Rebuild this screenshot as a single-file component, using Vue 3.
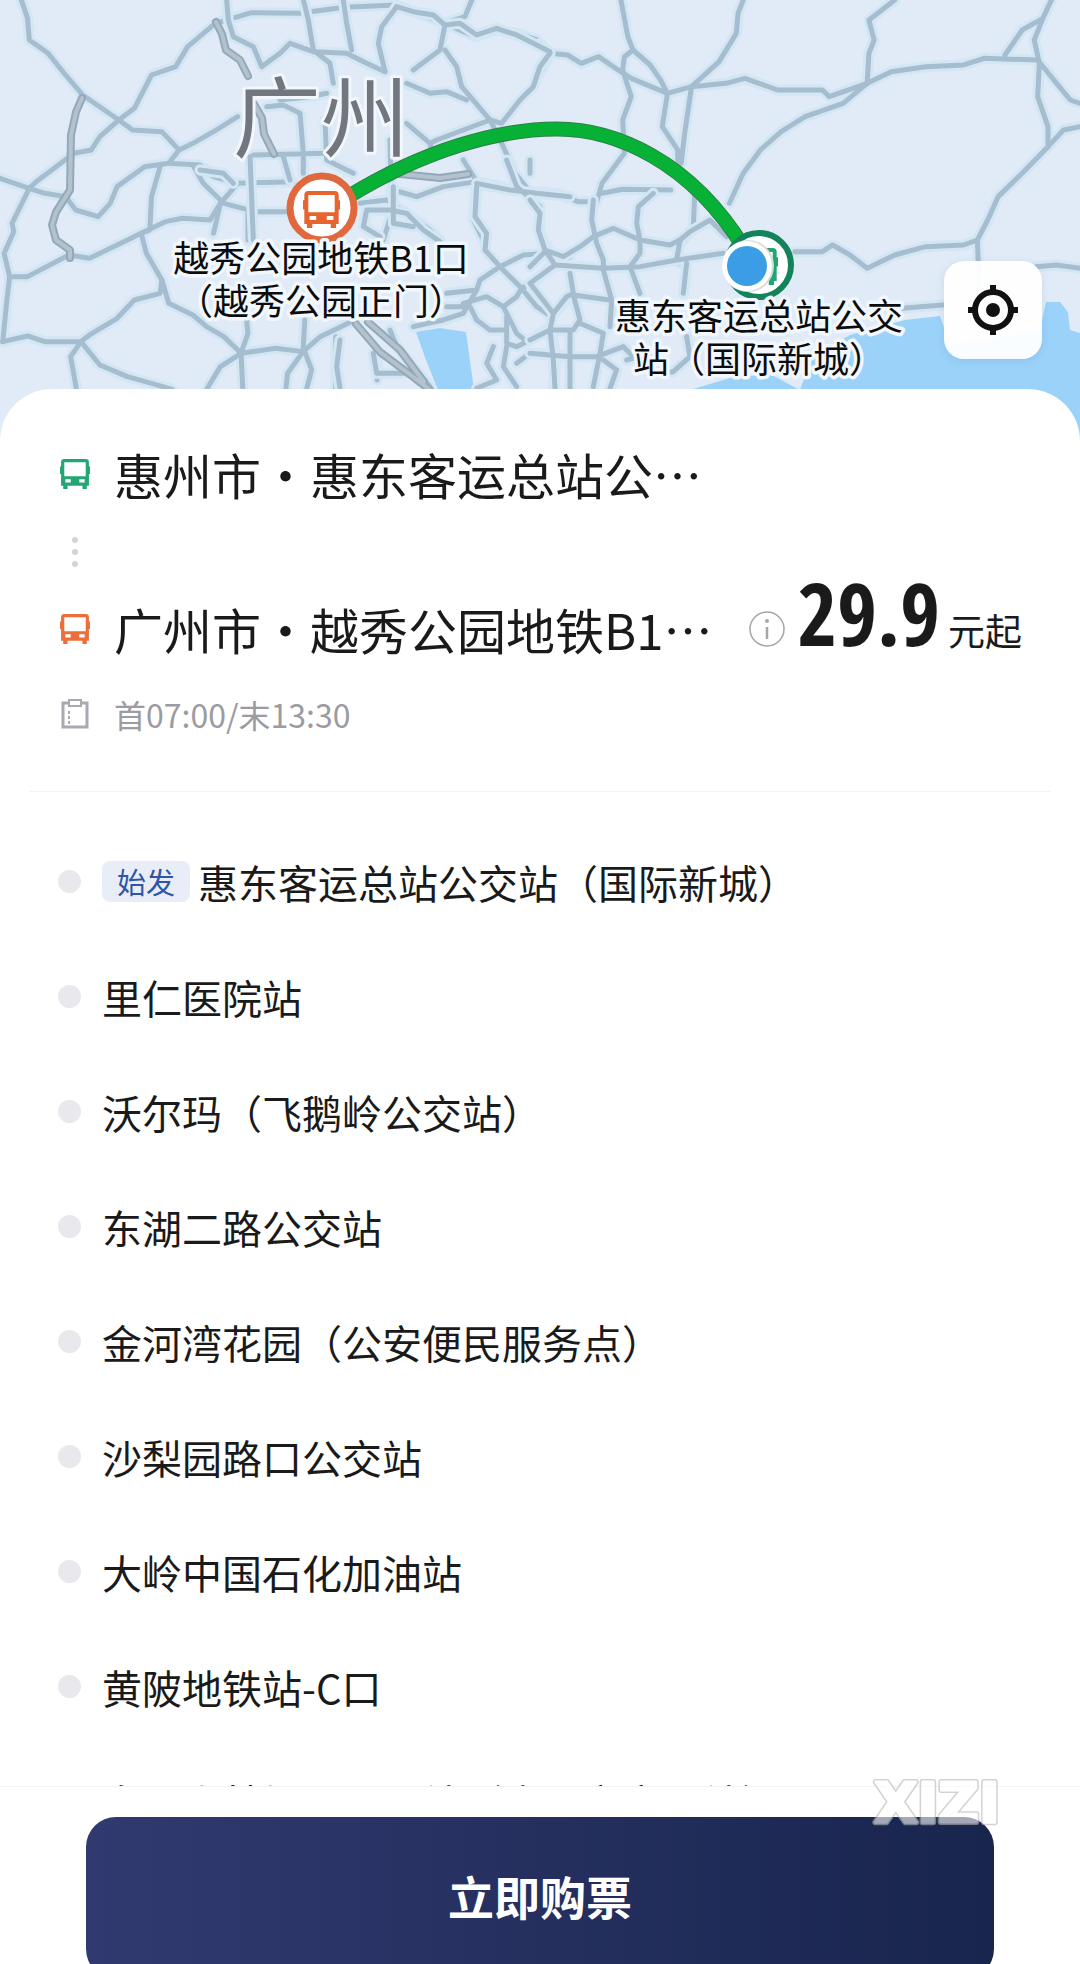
<script setup>
const roadTiles = [
  {
    transform: 'scale(.3444 .3333)',
    roads: [
      'M62 0L80 55 85 120 140 160 190 225 240 285 345 360 390 325 440 225 510 200 545 140 625 70 730 38 870 40 1000 22 1150 15 1290 70',
      'M345 360L385 390 470 395 520 450 560 430 620 395 690 350',
      'M345 360L290 410 265 450 215 460 105 545 85 565 0 535',
      'M85 565L35 670 40 695 12 760 28 830 80 830 200 765 260 775 340 735 410 700 480 665 530 655 610 660 640 610 690 550 850 545',
      'M28 830L20 900 8 1025',
      'M85 565L130 580 190 590 220 630 285 650 320 610 340 560 420 500 490 490 520 450',
      'M490 490L580 495 620 530 690 550',
      'M465 500L440 590 435 690 410 700 425 760 470 840 490 910 560 945 600 980 650 1010 700 1060',
      'M560 495L590 550 650 610 740 635 830 635',
      'M470 840L465 880 390 900 340 955 260 1005 235 1025 130 1025 80 1008 8 1025',
      'M235 1025L205 1070 222 1168',
      'M235 1025L290 1095 370 1130 440 1150 500 1168',
      'M720 640L720 720M640 610L620 700',
      'M700 1060L720 1000 715 950M700 1060L640 1100 600 1168M700 1060L800 1045 880 1055 930 1010 1030 960',
      'M700 1060L705 1168M880 1055L885 960M880 1055L835 1120 830 1168M885 1055L905 1110 890 1168M975 1010L975 1168M1095 1070L1095 1140',
      'M1560 120L1500 100 1440 90 1380 110 1290 70M1290 70L1350 50 1370 0',
    ],
  },
  {
    transform: 'translate(540 0) scale(.3444 .3333)',
    roads: [
      'M235 0L255 110 270 150 245 170 240 210 265 290 240 360 245 460 180 550 165 605 110 605 50 580 0 580',
      'M0 130L30 160 80 165 120 190 170 170 220 205 265 235 370 280 440 260 520 185 570 100 575 40 590 0',
      'M30 160L0 220M270 150L320 195 350 240 370 280 355 380 400 450 400 490M440 260L420 400 410 490',
      'M440 260L540 250 595 235 690 270 820 270 840 290 950 250 1020 215 1120 200 1230 195 1290 175 1445 180',
      'M950 250L955 160 970 120 955 60 1030 0M1350 165L1400 90 1460 55 1485 0M1460 55L1435 120 1450 190 1445 290 1475 380 1475 440 1400 520 1330 590 1300 660 1270 720 1275 860',
      'M1445 180L1500 250 1540 300 1568 310M1475 440L1520 390 1568 380',
      'M950 250L880 310 770 350 700 395 640 450 590 520 550 610',
      'M740 755L820 755 850 735 900 765 950 805 1030 765 1120 740 1230 735 1270 720M1440 800L1500 795 1568 805',
      'M1050 925L1170 915M180 580L240 568 380 570M450 560L445 690M450 680L400 740 405 790',
    ],
  },
  {
    transform: 'translate(200 0) scale(.3333)',
    roads: [
      'M80 0L85 60 100 110 160 140 185 200 240 160 270 130 340 155 440 160 500 190 555 215',
      'M310 0L325 60 340 150 390 190 400 250M430 0L440 70 455 150M590 20L545 80 535 130 555 215',
      'M590 20L640 35 700 45 735 75 720 150 640 210M735 75L780 70 830 105 890 85 950 105 1000 130 1050 155',
      'M735 150L770 200 785 260 870 360 905 370 960 300 1000 260 1020 200 1050 160',
      'M620 250L690 280 740 275 800 300M870 360L790 390 710 420 690 430 620 370M690 430L700 470',
      'M870 360L910 440 945 520 990 575 1050 578M790 480L830 545 930 565 1000 575M830 545L820 660 850 720',
      'M0 510L70 520 100 550M150 470L160 720M300 340L310 460 310 520M200 320L250 315 300 340M160 465L370 460M250 470L270 540M375 360L380 480 460 520',
      'M240 300L330 290 380 280M570 420L575 640 550 720M480 610L560 600 620 640 690 690 720 720M580 570L650 590 730 560 830 545',
    ],
  },
  {
    transform: 'translate(330 160) scale(.3333)',
    roads: [
      'M110 150L180 150 230 160 280 210 330 245M190 80L190 190 250 200M110 150L100 200 150 230',
      'M440 80L435 170 470 220 465 270 510 320 450 360 440 390 350 400',
      'M510 320L580 285 650 280 700 300 720 290M510 320L575 385 620 360 670 310M575 385L560 410 520 440 470 410 400 430',
      'M575 385L620 440 665 470 660 500 600 540 560 560 530 550 530 470M665 470L720 410M520 440L560 520 590 545',
      'M440 70L540 90 620 100 720 110M530 0L560 80 630 140 630 220 660 280M350 440L420 440 440 480 480 510 530 510',
      'M660 510L720 515M660 510L680 590 670 680M600 580L720 585M560 610L600 580M530 560L520 620 560 680M490 560L470 610 500 660 440 685',
      'M440 390L400 460 340 480 250 500M180 510L200 560 250 620 300 680M30 540L20 620 30 685M130 580L140 640 220 640',
    ],
  },
  {
    transform: 'translate(530 160) scale(.3333)',
    roads: [
      'M0 120L30 160 25 210 45 270 100 290 150 260 190 230M190 120L185 180 200 250 220 300 220 330',
      'M190 230L250 205 330 240M370 100L325 140 320 190 330 240 420 255 450 240M330 240L330 280 300 320 330 400',
      'M45 270L75 315 220 325 330 320 440 300 580 280M450 240L440 300M470 310L460 400M75 315L0 370 70 460 110 410 130 400 120 340',
      'M0 320L45 275M130 405L240 420M70 460L60 510 0 540M60 510L130 510 150 480 130 405M150 490L220 520 210 580 190 680M220 330L245 420 240 500M60 510L70 600 75 685',
      'M450 240L480 215 540 180 590 230M0 580L120 590 200 590 280 560 310 590M120 520L120 685M0 40L0 0M220 600L260 630 240 685M290 600L360 580',
      'M470 530L480 590 430 635 380 640',
    ],
  },
]

const expressways = [
  'M82 98L76 112 71 135 70 190 56 212 52 225 56 240 70 250 70 258',
  'M216 22L222 34 226 50 240 60 248 76',
  'M254 104L262 118 264 134 274 154',
  'M400 174L440 178 468 174',
  'M356 324L380 352 412 376 430 390M368 322L400 350 424 382',
]

const stations = [
  { name: '惠东客运总站公交站（国际新城）', tag: '始发' },
  { name: '里仁医院站' },
  { name: '沃尔玛（飞鹅岭公交站）' },
  { name: '东湖二路公交站' },
  { name: '金河湾花园（公安便民服务点）' },
  { name: '沙梨园路口公交站' },
  { name: '大岭中国石化加油站' },
  { name: '黄陂地铁站-C口' },
  { name: '白马山林场三元里站（广州市客运站）' },
]
</script>

<template>
  <main class="page">
    <section class="map">
      <svg class="map-canvas" viewBox="0 0 1080 440" preserveAspectRatio="xMidYMin slice">
        <defs>
          <symbol id="bus" viewBox="0 0 28 28">
            <path
              fill="currentColor"
              fill-rule="evenodd"
              d="M4 0H24Q27 0 27 3V7H28V14H27V25H25V28H21V25H7V28H3V25H1V14H0V7H1V3Q1 0 4 0ZM4 3V16H24V3ZM5 19V22H10V19ZM18 19V22H23V19Z"
            />
          </symbol>
        </defs>
        <rect width="1080" height="440" fill="#e0ebf7" />
        <path
          class="sea"
          d="M690 390L730 378 770 374 800 390 812 356 850 335 905 320 940 316 950 345 1040 330 1046 302 1060 302 1068 312 1070 330 1080 333V440H690Z"
        />
        <path class="sea" d="M416 332L440 328 466 332 474 390 438 390 426 360Z" />
        <g v-for="tile in roadTiles" :key="tile.transform" :transform="tile.transform">
          <path v-for="road in tile.roads" :key="road" class="road-halo" :d="road" />
          <path v-for="road in tile.roads" :key="road + 'r'" class="road" :d="road" />
        </g>
        <g v-for="road in expressways" :key="road">
          <path class="expressway" :d="road" />
          <path class="expressway-core" :d="road" />
        </g>

        <text class="city" x="321" y="150">广州</text>

        <path class="arc arc-edge" d="M346 198C425 149 500 129 557 129S690 160 744 248" />
        <path class="arc" d="M346 198C425 149 500 129 557 129S690 160 744 248" />

        <circle cx="322" cy="208" r="32" fill="#fff" stroke="#e0683c" stroke-width="7" />
        <use href="#bus" x="303" y="191" width="37" height="37" color="#e8642f" />

        <circle cx="759" cy="265" r="32" fill="#fff" stroke="#12835a" stroke-width="6" />
        <use href="#bus" x="741" y="248" width="37" height="37" color="#1fa673" />
        <circle cx="748" cy="266" r="26" fill="#d5dbdb" />
        <circle cx="747" cy="266" r="25" fill="#fff" />
        <circle cx="747" cy="266" r="20" fill="#3b9de6" />

        <text class="place" x="321" y="272">越秀公园地铁B1口</text>
        <text class="place" x="321" y="315">（越秀公园正门）</text>
        <text class="place" x="759" y="330">惠东客运总站公交</text>
        <text class="place" x="759" y="373">站（国际新城）</text>
      </svg>
      <button class="locate" type="button" aria-label="定位">
        <svg viewBox="0 0 52 52" width="52" height="52" fill="none" stroke="#111">
          <circle cx="26" cy="26" r="18" stroke-width="6" />
          <circle cx="26" cy="26" r="7" fill="#111" stroke="none" />
          <path d="M26 1V10M26 42V51M1 26H10M42 26H51" stroke-width="6" />
        </svg>
      </button>
    </section>

    <section class="sheet">
      <header class="route">
        <div class="stop">
          <svg class="icon from"><use href="#bus" /></svg>
          <h1 class="stop-name">惠州市・惠东客运总站公<span class="more" lang="zh-CN">…</span></h1>
        </div>
        <div class="dots"><i></i><i></i><i></i></div>
        <div class="stop">
          <svg class="icon to"><use href="#bus" /></svg>
          <h1 class="stop-name">广州市・越秀公园地铁B1<span class="more" lang="zh-CN">…</span></h1>
          <div class="price">
            <button class="info" type="button" aria-label="票价说明">
              <svg viewBox="0 0 36 36" width="36" height="36" fill="none" stroke="#a6a6a6">
                <circle cx="18" cy="18" r="17" stroke-width="1.500" />
                <path d="M18 16V28" stroke-width="2.500" />
                <circle cx="18" cy="10" r="2" fill="#a6a6a6" stroke="none" />
              </svg>
            </button>
            <div class="fare">
              <strong class="amount">29.9</strong>
              <span class="unit">元起</span>
            </div>
          </div>
        </div>
        <div class="hours">
          <svg class="icon" viewBox="0 0 30 30" fill="none" stroke="#a9a9b2" stroke-width="3">
            <path d="M9 4H3V28H27V4H21" />
            <path d="M9 1H21V7H9Z" stroke-width="2" />
            <path d="M9 12V15M9 17V20M9 22V25" stroke-width="2" />
          </svg>
          <span>首07:00/末13:30</span>
        </div>
      </header>

      <ol class="stations">
        <li v-for="station in stations" :key="station.name" class="station">
          <i class="bullet"></i>
          <span v-if="station.tag" class="tag">{{ station.tag }}</span>
          <span class="station-name">{{ station.name }}</span>
        </li>
      </ol>
    </section>

    <footer class="footer">
      <button class="buy" type="button">立即购票</button>
      <svg class="watermark" viewBox="0 0 140 56" width="140" height="56" aria-label="XIZI">
        <text class="mark-edge" x="70" y="47">XIZI</text>
        <text class="mark-face" x="70" y="47">XIZI</text>
      </svg>
    </footer>
  </main>
</template>

<style>
body {
  margin: 0;
  overflow: hidden;
}
</style>

<style scoped>
.page {
  display: flex;
  flex-direction: column;
  height: 100vh;
  overflow: hidden;
  background: #fff;
  color: #1a1a1a;
  font-family: "Noto Sans CJK SC", "Noto Sans", sans-serif;
}

button {
  padding: 0;
  border: 0;
  font-family: inherit;
}

.map {
  position: relative;
  flex: none;
  height: 440px;
}

.map-canvas {
  display: block;
  width: 100%;
  height: 100%;
}

.sea {
  fill: #9bd2f9;
}

.road,
.road-halo,
.expressway,
.expressway-core {
  fill: none;
  stroke-linejoin: round;
  stroke-linecap: round;
  vector-effect: non-scaling-stroke;
}

.road-halo {
  stroke: #d3e6f4;
  stroke-width: 11px;
}

.road {
  stroke: #a6bdcf;
  stroke-width: 5px;
}

.expressway {
  stroke: #93a9ba;
  stroke-width: 8px;
}

.expressway-core {
  stroke: #b4c2cd;
  stroke-width: 4px;
}

.city,
.place {
  text-anchor: middle;
  paint-order: stroke;
  stroke: #f1f7fd;
  stroke-linejoin: round;
}

.city {
  font-size: 88px;
  fill: #71767f;
  stroke-width: 6px;
}

.place {
  font-size: 36px;
  fill: #0c0c0c;
  stroke-width: 7px;
}

.arc {
  fill: none;
  stroke: #06b135;
  stroke-width: 13px;
}

.arc-edge {
  stroke: #2f8048;
  stroke-width: 15px;
}

.locate {
  position: absolute;
  top: 261px;
  right: 38px;
  display: flex;
  align-items: center;
  justify-content: center;
  width: 98px;
  height: 98px;
  border-radius: 20px;
  background: rgba(255, 255, 255, 0.95);
  box-shadow: 0 2px 8px rgba(60, 90, 120, 0.12);
}

.sheet {
  position: relative;
  flex: 1;
  min-height: 0;
  margin-top: -51px;
  padding: 50px 30px 0;
  overflow: hidden;
  border-radius: 52px 52px 0 0;
  background: #fff;
}

.route {
  padding: 0 28px 53px 30px;
  border-bottom: 1px solid #f3f3f3;
}

.stop {
  display: flex;
  align-items: center;
  height: 70px;
}

.icon {
  flex: none;
  width: 30px;
  height: 30px;
  margin-right: 24px;
}

.from {
  color: #23a673;
}

.to {
  color: #ec6f3b;
}

.stop-name {
  margin: 0;
  font-size: 49px;
  font-weight: 400;
  line-height: 70px;
  white-space: nowrap;
}

.more {
  display: inline-block;
}

.dots {
  display: flex;
  flex-direction: column;
  align-items: center;
  justify-content: center;
  gap: 6px;
  width: 30px;
  height: 85px;
}

.dots i {
  width: 6px;
  height: 6px;
  border-radius: 50%;
  background: #d4d4d4;
}

.price {
  display: flex;
  align-items: center;
  margin-left: auto;
  white-space: nowrap;
}

.info {
  width: 36px;
  height: 36px;
  margin-right: 12px;
  background: none;
}

.info svg {
  display: block;
}

.fare {
  display: flex;
  align-items: baseline;
  padding-bottom: 30px;
}

.amount {
  font-family: "Noto Sans ExtraCondensed", "Open Sans Condensed", "Roboto Condensed", "Liberation Sans Narrow", sans-serif;
  font-size: 86px;
  font-weight: 900;
  line-height: 70px;
}

.unit {
  margin-left: 8px;
  font-size: 37px;
  line-height: 40px;
}

.hours {
  display: flex;
  align-items: center;
  height: 48px;
  margin-top: 26px;
  color: #9b9ba1;
  font-size: 32px;
}

.stations {
  margin: 0;
  padding: 32px 28px 0;
  list-style: none;
}

.station {
  display: flex;
  align-items: center;
  height: 115px;
  font-size: 40px;
  white-space: nowrap;
}

.bullet {
  width: 23px;
  height: 23px;
  margin-right: 21px;
  border-radius: 50%;
  background: #e9e9ed;
}

.tag {
  margin-right: 8px;
  padding: 0 15px;
  border-radius: 8px;
  background: #e8edf7;
  color: #2f55a8;
  font-size: 29px;
  line-height: 41px;
}

.footer {
  position: relative;
  flex: none;
  height: 147px;
  padding: 30px 86px 0;
  border-top: 1px solid #f3f3f3;
  background: #fff;
}

.buy {
  display: block;
  width: 100%;
  height: 162px;
  padding-bottom: 6px;
  border-radius: 30px;
  background: linear-gradient(90deg, #313a70, #18254d);
  color: #fff;
  font-size: 46px;
  font-weight: 700;
}

.watermark {
  position: absolute;
  top: -12px;
  right: 73px;
  opacity: 0.6;
}

.mark-edge,
.mark-face {
  font-family: "DejaVu Sans", sans-serif;
  font-size: 56px;
  font-weight: 700;
  text-anchor: middle;
  stroke-linejoin: round;
}

.mark-edge {
  fill: #b5b5b5;
  stroke: #b5b5b5;
  stroke-width: 6px;
}

.mark-face {
  fill: #fff;
  stroke: #fff;
  stroke-width: 3px;
}
</style>
